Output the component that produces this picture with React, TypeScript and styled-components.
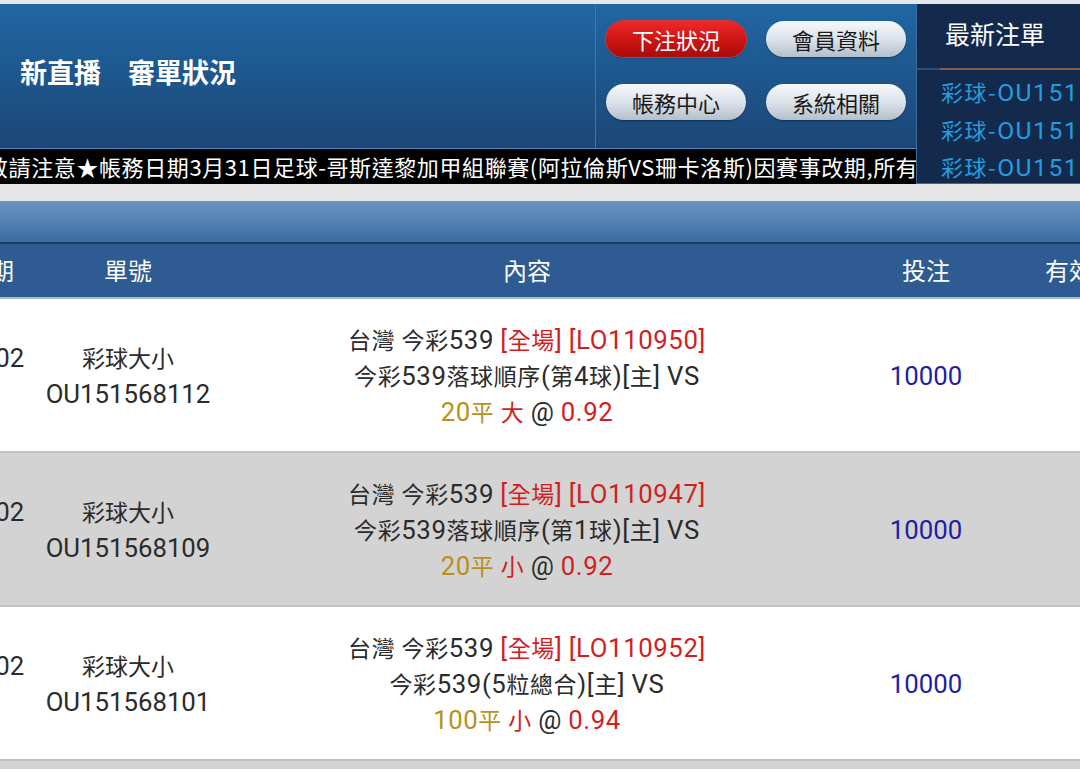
import React from "react";
import styled, { createGlobalStyle } from "styled-components";

const Global = createGlobalStyle`
  html, body { margin: 0; padding: 0; }
  body {
    width: 1080px;
    height: 769px;
    overflow: hidden;
    background: #e6e6e6;
    font-family: "Roboto", "Noto Sans CJK TC", sans-serif;
  }
`;

const Page = styled.div`
  width: 1080px;
  height: 769px;
  overflow: hidden;
  background: #e6e6e6;
`;

const TopStrip = styled.div`
  height: 4px;
  background: #e3e8ef;
`;

const Header = styled.div`
  display: flex;
  height: 180px;
`;

const LeftBlock = styled.div`
  width: 916px;
  flex: none;
  display: flex;
  flex-direction: column;
`;

const TopRow = styled.div`
  display: flex;
  flex: none;
  height: 144px;
  background: linear-gradient(#2067a4, #1c4676);
`;

const TitleArea = styled.div`
  width: 596px;
  box-sizing: border-box;
  border-right: 1px solid #3f78ae;
  display: flex;
  align-items: center;
  padding-left: 20px;
  padding-bottom: 10px;
`;

const Title = styled.h1`
  margin: 0;
  color: #fff;
  font-family: "Noto Sans CJK TC", sans-serif;
  font-weight: 700;
  font-size: 27px;
  white-space: pre;
`;

const ButtonArea = styled.div`
  flex: 1;
  display: grid;
  grid-template-columns: 140px 140px;
  grid-auto-rows: 36px;
  column-gap: 20px;
  row-gap: 27px;
  padding: 17px 0 0 10px;
`;

const Pill = styled.div<{ $active?: boolean }>`
  border-radius: 18px;
  display: flex;
  align-items: center;
  justify-content: center;
  font-family: "Noto Sans CJK TC", sans-serif;
  font-size: 22px;
  color: ${(p) => (p.$active ? "#ffffff" : "#1a1a1a")};
  background: ${(p) =>
    p.$active
      ? "linear-gradient(#ee2a2a, #d01515 50%, #a80c0c)"
      : "linear-gradient(#f6f8fb, #dde3ea 50%, #b3bfcd)"};
  box-shadow: ${(p) =>
    p.$active
      ? "0 0 0 1px #d8343a, 0 1px 2px rgba(0,0,0,0.4)"
      : "0 1px 2px rgba(0,0,0,0.35)"};
`;

const Ticker = styled.div`
  height: 36px;
  flex: none;
  box-sizing: border-box;
  background: #000;
  border-top: 1px solid #4b86bd;
  color: #fff;
  font-family: "Noto Sans CJK TC", sans-serif;
  font-size: 22px;
  letter-spacing: 0.6px;
  line-height: 34px;
  white-space: nowrap;
  overflow: hidden;
  text-indent: -14px;
`;

const Panel = styled.div`
  flex: 1;
  height: 180px;
  overflow: hidden;
  background: #132a4c;
  border-left: 1px solid #3a6b9d;
  border-bottom: 1px solid #3a6b9d;
  box-sizing: border-box;
  display: flex;
  flex-direction: column;
`;

const PanelTitle = styled.div`
  flex: none;
  height: 64px;
  box-sizing: border-box;
  padding: 11px 0 0 28px;
  color: #fff;
  font-family: "Noto Sans CJK TC", sans-serif;
  font-size: 25px;
  white-space: nowrap;
`;

const PanelRule = styled.div`
  flex: none;
  height: 2px;
  background: linear-gradient(to right, #2f4e74 23px, #8a5a48 23px);
`;

const PanelList = styled.div`
  flex: none;
  padding: 3px 0 0 24px;
  display: flex;
  flex-direction: column;
`;

const PanelLink = styled.div`
  color: #229ddf;
  font-family: "Noto Sans CJK TC", sans-serif;
  font-size: 22px;
  line-height: 37.5px;
  white-space: nowrap;
  letter-spacing: 1.5px;
`;

const Gap = styled.div`
  height: 17px;
`;

const Table = styled.div`
  margin-left: -60px;
  width: 1200px;
`;

const Band = styled.div`
  height: 41px;
  background: linear-gradient(#6b95c2, #3b6ca3);
  border-bottom: 2px solid #183a63;
`;

const Grid = styled.div`
  display: grid;
  grid-template-columns: 100px 176px 622px 176px 110px;
`;

const HeadRow = styled(Grid)`
  height: 51px;
  padding-bottom: 2px;
  background: #2d5b92;
  border-bottom: 2px solid #a7bcd3;
  color: #fff;
  font-family: "Noto Sans CJK TC", sans-serif;
  font-size: 24px;
  line-height: 48px;
`;

const Cell = styled.div<{ $spaced?: boolean }>`
  display: flex;
  flex-direction: column;
  align-items: center;
  justify-content: center;
  white-space: nowrap;
  min-width: 0;
  letter-spacing: ${(p) => (p.$spaced ? "0.6px" : "normal")};
`;

const Row = styled(Grid)<{ $alt?: boolean }>`
  height: 154px;
  background: ${(p) => (p.$alt ? "#d3d3d3" : "#ffffff")};
  border-bottom: 2px solid #c2c2c2;
  color: #2b2b2b;
  font-size: 23px;
  line-height: 36px;
  padding-top: 6px;
  box-sizing: border-box;
`;

const Lat = styled.span`
  font-family: "Roboto", sans-serif;
  font-size: 1.12em;
  line-height: 1;
`;

const Red = styled.span`
  color: #d11f1f;
`;

const Gold = styled.span`
  color: #b8901c;
`;

const Amount = styled.span`
  color: #1d1da6;
`;

function Mixed({ text }: { text: string }) {
  const parts = text.split(/([\x21-\x7e]+)/);
  return (
    <>
      {parts.map((p, i) =>
        /[\x21-\x7e]/.test(p) ? <Lat key={i}>{p}</Lat> : <React.Fragment key={i}>{p}</React.Fragment>
      )}
    </>
  );
}

type Bet = {
  id: string;
  lo: string;
  play: string;
  line: string;
  side: string;
  odds: string;
};

const bets: Bet[] = [
  { id: "OU151568112", lo: "LO110950", play: "今彩539落球順序(第4球)[主] VS", line: "20平", side: "大", odds: "0.92" },
  { id: "OU151568109", lo: "LO110947", play: "今彩539落球順序(第1球)[主] VS", line: "20平", side: "小", odds: "0.92" },
  { id: "OU151568101", lo: "LO110952", play: "今彩539(5粒總合)[主] VS", line: "100平", side: "小", odds: "0.94" },
];

export default function App() {
  return (
    <Page>
      <Global />
      <TopStrip />
      <Header>
        <LeftBlock>
          <TopRow>
            <TitleArea>
              <Title>新直播　審單狀況</Title>
            </TitleArea>
            <ButtonArea>
              <Pill $active>下注狀況</Pill>
              <Pill>會員資料</Pill>
              <Pill>帳務中心</Pill>
              <Pill>系統相關</Pill>
            </ButtonArea>
          </TopRow>
          <Ticker>
            敬請注意★帳務日期3月31日足球-哥斯達黎加甲組聯賽(阿拉倫斯VS珊卡洛斯)因賽事改期,所有
          </Ticker>
        </LeftBlock>
        <Panel>
          <PanelTitle>最新注單</PanelTitle>
          <PanelRule />
          <PanelList>
            {bets.map((b) => (
              <PanelLink key={b.id}>
                彩球-<Mixed text={b.id} />
              </PanelLink>
            ))}
          </PanelList>
        </Panel>
      </Header>
      <Gap />
      <Table>
        <Band />
        <HeadRow>
          <Cell>日期</Cell>
          <Cell>單號</Cell>
          <Cell>內容</Cell>
          <Cell>投注</Cell>
          <Cell>有效</Cell>
        </HeadRow>
        {bets.map((b, i) => (
          <Row key={b.id} $alt={i % 2 === 1}>
            <Cell>
              <div><Lat>04/02</Lat></div>
              <div>&nbsp;</div>
            </Cell>
            <Cell>
              <div>彩球大小</div>
              <div><Lat>{b.id}</Lat></div>
            </Cell>
            <Cell $spaced>
              <div>
                <Mixed text="台灣 今彩539 " />
                <Red><Mixed text={`[全場] [${b.lo}]`} /></Red>
              </div>
              <div><Mixed text={b.play} /></div>
              <div>
                <Gold><Mixed text={b.line} /></Gold> <Red>{b.side}</Red> <Lat>@</Lat>{" "}
                <Red><Lat>{b.odds}</Lat></Red>
              </div>
            </Cell>
            <Cell>
              <Amount><Lat>10000</Lat></Amount>
            </Cell>
            <Cell />
          </Row>
        ))}
        <Row $alt />
      </Table>
    </Page>
  );
}
